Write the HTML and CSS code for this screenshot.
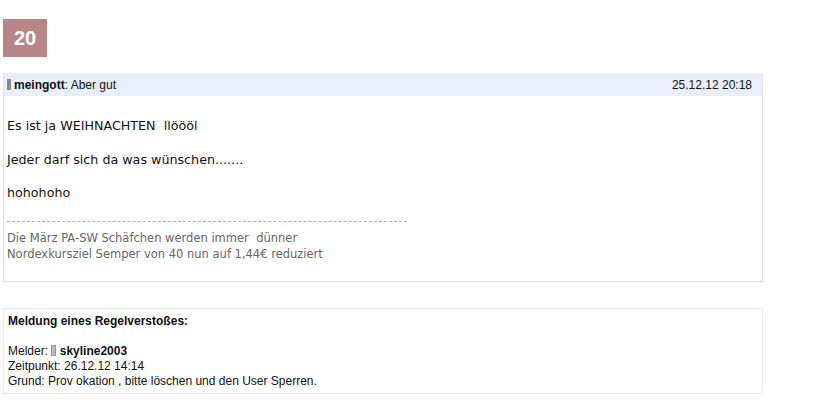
FILE: index.html
```html
<!DOCTYPE html>
<html lang="de">
<head>
<meta charset="utf-8">
<link rel="stylesheet" href="styles.css">
</head>
<body>
<div class="page">
  <div class="badge">20</div>
  <div class="post">
    <div class="post-head">
      <div class="author"><span class="ubar"></span><b>meingott</b>: Aber gut</div>
      <div class="date">25.12.12 20:18</div>
    </div>
    <div class="post-body">
      <p>Es ist ja WEIHNACHTEN&nbsp; llöööl</p>
      <p>Jeder darf sich da was wünschen.......</p>
      <p>hohohoho</p>
      <div class="sig">
        <div>Die März PA-SW Schäfchen werden immer&nbsp; dünner</div>
        <div>Nordexkursziel Semper von 40 nun auf 1,44€ reduziert</div>
      </div>
    </div>
  </div>
  <div class="report">
    <div class="report-title">Meldung eines Regelverstoßes:</div>
    <div class="blank">&nbsp;</div>
    <div>Melder: <span class="ubar-small"></span> <b>skyline2003</b></div>
    <div>Zeitpunkt: 26.12.12 14:14</div>
    <div>Grund: Prov okation , bitte löschen und den User Sperren.</div>
  </div>
</div>
</body>
</html>
```
FILE: styles.css
```css
html, body {
  margin: 0;
  padding: 0;
  background: #ffffff;
}
.page {
  width: 760px;
  padding: 19px 0 0 3px;
  font-family: "Liberation Sans", Arial, sans-serif;
  color: #111;
}
.badge {
  width: 44px;
  height: 38px;
  background: #b98688;
  color: #ffffff;
  font-weight: bold;
  font-size: 20px;
  line-height: 38px;
  text-align: center;
}
.post {
  margin-top: 16px;
  border: 1px solid #e3e3e6;
  border-top: none;
}
.post-head {
  height: 23px;
  background: #e8eefb;
  display: flex;
  justify-content: space-between;
  align-items: center;
  font-size: 12px;
  padding: 0 10px 0 3px;
}
.author {
  display: flex;
  align-items: center;
}
.ubar {
  display: inline-block;
  width: 4px;
  height: 11px;
  background: #8a8a8a;
  margin-right: 3px;
}
.post-body {
  padding: 22px 3px 19px 3px;
  font-family: Verdana, "DejaVu Sans", sans-serif;
  font-size: 12.7px;
  color: #111;
}
.post-body p {
  margin: 0 0 17.5px 0;
  line-height: 16px;
}
.post-body p:last-of-type {
  margin-bottom: 0;
}
.sig {
  margin-top: 20px;
  width: 400px;
  border-top: 1px dashed #b0b0b0;
  padding-top: 8px;
  font-size: 11.5px;
  line-height: 16px;
  color: #666;
}
.report {
  margin-top: 26px;
  border: 1px solid #e2f2e2;
  padding: 5px 4px 4px 4px;
  font-size: 12px;
  line-height: 15px;
  color: #111;
}
.report-title {
  font-weight: bold;
}
.ubar-small {
  display: inline-block;
  width: 3px;
  height: 9px;
  border: 1px solid #999;
  background: #bbb;
  vertical-align: -1px;
}
```
